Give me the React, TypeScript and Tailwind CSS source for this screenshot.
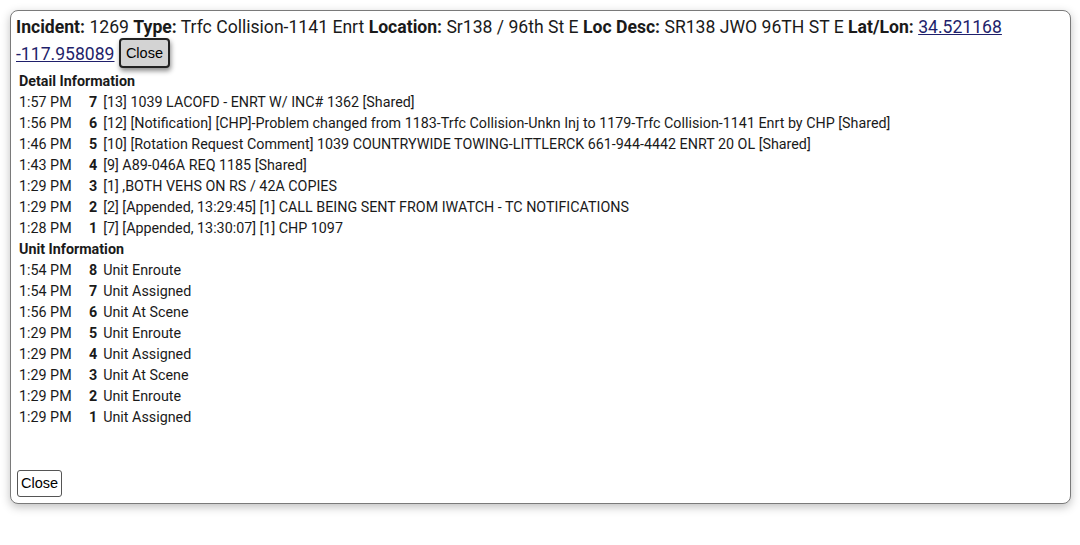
import React from "react";

const details: [string, string, string][] = [
  ["1:57 PM", "7", "[13] 1039 LACOFD - ENRT W/ INC# 1362 [Shared]"],
  ["1:56 PM", "6", "[12] [Notification] [CHP]-Problem changed from 1183-Trfc Collision-Unkn Inj to 1179-Trfc Collision-1141 Enrt by CHP [Shared]"],
  ["1:46 PM", "5", "[10] [Rotation Request Comment] 1039 COUNTRYWIDE TOWING-LITTLERCK 661-944-4442 ENRT 20 OL [Shared]"],
  ["1:43 PM", "4", "[9] A89-046A REQ 1185 [Shared]"],
  ["1:29 PM", "3", "[1] ,BOTH VEHS ON RS / 42A COPIES"],
  ["1:29 PM", "2", "[2] [Appended, 13:29:45] [1] CALL BEING SENT FROM IWATCH - TC NOTIFICATIONS"],
  ["1:28 PM", "1", "[7] [Appended, 13:30:07] [1] CHP 1097"],
];

const units: [string, string, string][] = [
  ["1:54 PM", "8", "Unit Enroute"],
  ["1:54 PM", "7", "Unit Assigned"],
  ["1:56 PM", "6", "Unit At Scene"],
  ["1:29 PM", "5", "Unit Enroute"],
  ["1:29 PM", "4", "Unit Assigned"],
  ["1:29 PM", "3", "Unit At Scene"],
  ["1:29 PM", "2", "Unit Enroute"],
  ["1:29 PM", "1", "Unit Assigned"],
];

function Row({ r }: { r: [string, string, string] }) {
  return (
    <div className="flex h-[21px] items-center">
      <div className="w-[70px] shrink-0">{r[0]}</div>
      <div className="flex">
        <b className="font-bold">{r[1]}</b>
        <span className="ml-[6px]">{r[2]}</span>
      </div>
    </div>
  );
}

export default function App() {
  return (
    <div className="w-[1080px] h-[545px] bg-white pt-[10px] pl-[10px] pr-[9px]" style={{ fontFamily: "Roboto, 'Liberation Sans', sans-serif" }}>
      <div className="h-[494px] rounded-[8px] border border-[#7a7a7a] bg-white shadow-[0_3px_10px_rgba(0,0,0,0.25)] pl-[5px] pr-2 pt-[4px] text-[#1a1a1a] flex flex-col">
        <div className="text-[17.6px] leading-[25px]">
          <b className="font-bold">Incident:</b> 1269 <b className="font-bold">Type:</b> Trfc Collision-1141 Enrt{" "}
          <b className="font-bold">Location:</b> Sr138 / 96th St E <b className="font-bold">Loc Desc:</b> SR138 JWO 96TH ST E{" "}
          <b className="font-bold">Lat/Lon:</b> <a className="text-[#1f1f6b] underline">34.521168 -117.958089</a>{" "}
          <button
            className="inline-block align-middle h-[30px] px-[5px] rounded-[4px] border-2 border-[#222] bg-[#d3d3d3] text-[14.5px] leading-[26px] text-black shadow-[1px_3px_5px_rgba(0,0,0,0.45)] relative top-[-2px]"
            style={{ fontFamily: "'Liberation Sans', Arial, sans-serif" }}
          >
            Close
          </button>
        </div>
        <div className="pl-[3px] text-[14.3px] mt-[1px]">
          <div className="font-bold h-[21px] flex items-center">Detail Information</div>
          {details.map((r, i) => (
            <Row key={i} r={r} />
          ))}
          <div className="font-bold h-[21px] flex items-center">Unit Information</div>
          {units.map((r, i) => (
            <Row key={i} r={r} />
          ))}
        </div>
        <div className="mt-auto mb-[6px] pl-[1px]">
          <button
            className="h-[27px] px-[3px] rounded-[3px] border border-[#555] bg-white text-[14.5px] text-black"
            style={{ fontFamily: "'Liberation Sans', Arial, sans-serif" }}
          >
            Close
          </button>
        </div>
      </div>
    </div>
  );
}
